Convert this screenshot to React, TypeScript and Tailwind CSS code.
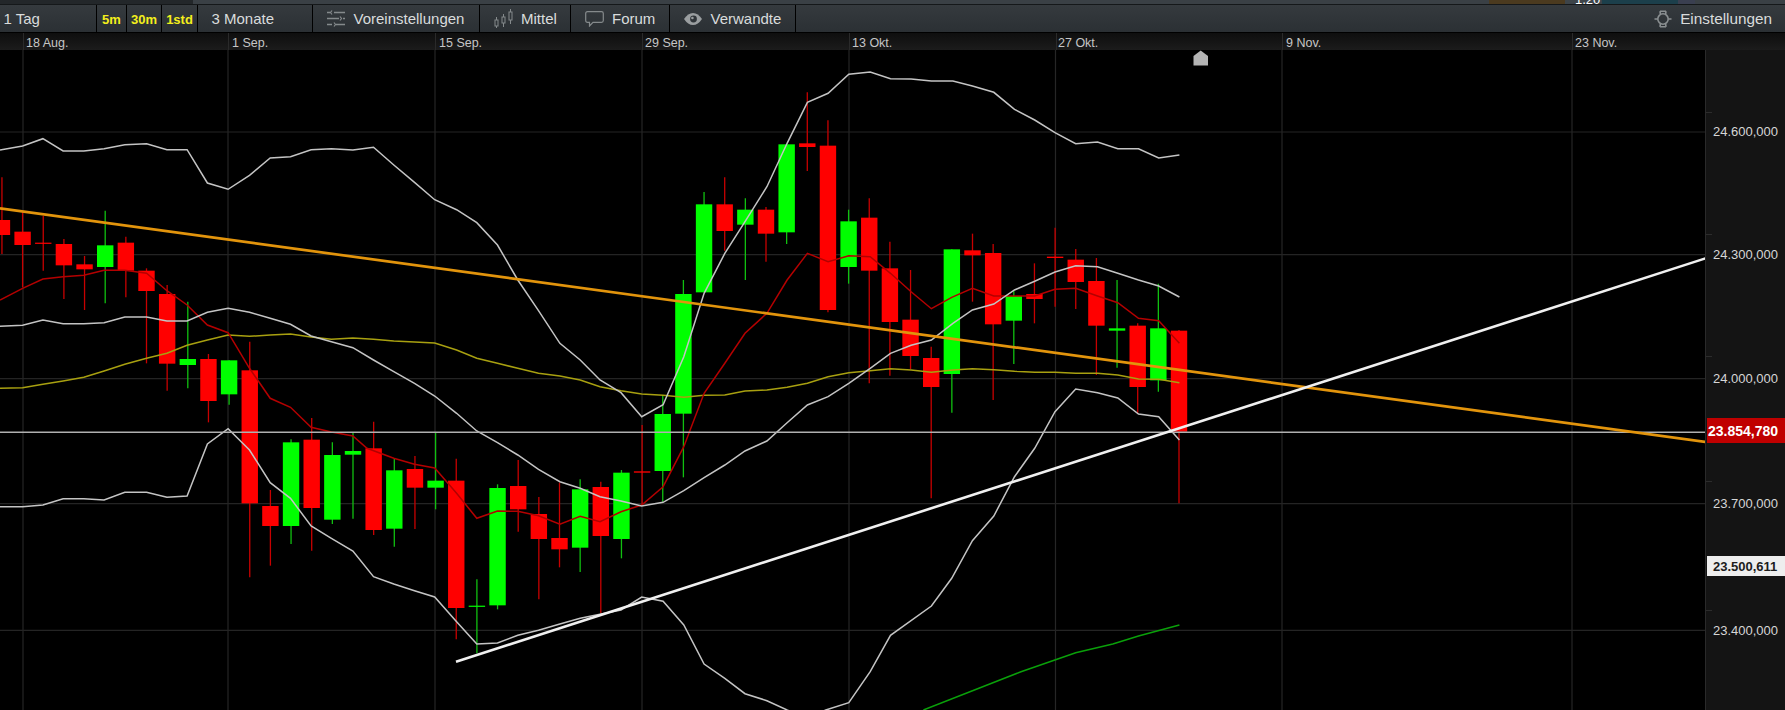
const F = 'font-["Liberation_Sans",Arial,sans-serif]';

const xOf = (i: number) => 22.6 + 20.65 * i;
const Y = (u: number) => 60 + u / 3;
const ZL = (z: number) => z / 2.613;
const ZR = (z: number) => 600 + z / 2.613;
const D = 930;

// index, green?, wickTop, bodyTop, bodyBottom, wickBottom (vertical zoom units)
const candles: [number, number, number, number, number, number][] = [
  [-1, 0, 352, 480, 525, 582],
  [0, 0, 455, 515, 555, 682],
  [1, 0, 468, 548, 551, 632],
  [2, 0, 537, 552, 616, 717],
  [3, 0, 588, 613, 628, 750],
  [4, 1, 452, 556, 621, 730],
  [5, 0, 530, 548, 632, 712],
  [6, 0, 625, 632, 693, 910],
  [7, 0, 675, 702, 911, 992],
  [8, 1, 725, 897, 915, 985],
  [9, 0, 882, 897, 93 + D, 157 + D],
  [10, 1, 901, 901, 73 + D, 104 + D],
  [11, 0, 845, 931, 400 + D, 622 + D],
  [12, 0, 360 + D, 408 + D, 468 + D, 587 + D],
  [13, 1, 208 + D, 217 + D, 468 + D, 522 + D],
  [14, 0, 144 + D, 209 + D, 414 + D, 542 + D],
  [15, 1, 217 + D, 255 + D, 449 + D, 462 + D],
  [16, 1, 189 + D, 243 + D, 254 + D, 446 + D],
  [17, 0, 155 + D, 235 + D, 480 + D, 495 + D],
  [18, 1, 265 + D, 301 + D, 476 + D, 530 + D],
  [19, 0, 258 + D, 297 + D, 353 + D, 477 + D],
  [20, 1, 187 + D, 332 + D, 353 + D, 418 + D],
  [21, 0, 266 + D, 332 + D, 714 + D, 808 + D],
  [22, 1, 628 + D, 707 + D, 710 + D, 850 + D],
  [23, 1, 343 + D, 354 + D, 706 + D, 718 + D],
  [24, 0, 270 + D, 348 + D, 418 + D, 485 + D],
  [25, 0, 381 + D, 432 + D, 507 + D, 688 + D],
  [26, 0, 338 + D, 504 + D, 538 + D, 592 + D],
  [27, 1, 328 + D, 358 + D, 533 + D, 606 + D],
  [28, 0, 335 + D, 351 + D, 498 + D, 730 + D],
  [29, 1, 300 + D, 308 + D, 507 + D, 565 + D],
  [30, 0, 165 + D, 304 + D, 308 + D, 405 + D],
  [31, 1, 75 + D, 132 + D, 303 + D, 395 + D],
  [32, 1, 660, 702, 131 + D, 322 + D],
  [33, 1, 396, 433, 697, 697],
  [34, 0, 352, 433, 513, 572],
  [35, 1, 415, 449, 494, 660],
  [36, 0, 441, 449, 521, 605],
  [37, 1, 253, 253, 517, 552],
  [38, 0, 97, 250, 261, 333],
  [39, 0, 181, 257, 750, 757],
  [40, 1, 449, 484, 621, 671],
  [41, 0, 415, 473, 632, 40 + D],
  [42, 0, 545, 625, 786, 947],
  [43, 0, 630, 779, 888, 927],
  [44, 0, 860, 894, 981, 385 + D],
  [45, 1, 568, 568, 942, 128 + D],
  [46, 0, 521, 571, 586, 725],
  [47, 0, 552, 579, 793, 90 + D],
  [48, 1, 693, 708, 782, 912],
  [49, 0, 610, 702, 717, 790],
  [50, 0, 503, 590, 594, 740],
  [51, 0, 567, 599, 666, 747],
  [52, 0, 594, 663, 797, 945],
  [53, 1, 660, 805, 812, 923],
  [54, 0, 790, 797, 981, 130 + D],
  [55, 1, 671, 805, 961, 65 + D],
  [56, 0, 810, 812, 185 + D, 400 + D],
];

type P = [number, number];
const pts = (l: P[], r: P[]) =>
  [...l.map(([x, u]) => `${ZL(x).toFixed(1)},${Y(u).toFixed(1)}`), ...r.map(([x, u]) => `${ZR(x).toFixed(1)},${Y(u).toFixed(1)}`)].join(" ");

const upper = pts(
  [[0, 270], [59, 258], [112, 236], [165, 273], [219, 273], [272, 266], [326, 254], [383, 251], [436, 269], [489, 269], [542, 369], [596, 388], [652, 346], [706, 294], [759, 290], [813, 269], [866, 266], [922, 270], [976, 262], [1029, 315], [1083, 367], [1136, 419], [1193, 449], [1246, 488], [1300, 555], [1353, 660], [1407, 752], [1463, 850], [1516, 900]],
  [[0, 960], [55, 998], [109, 1070], [165, 1034], [219, 890], [272, 700], [326, 580], [379, 485], [436, 380], [489, 250], [542, 127], [596, 100], [650, 43], [706, 36], [759, 56], [813, 57], [866, 63], [922, 63], [973, 78], [1029, 97], [1083, 148], [1136, 180], [1189, 218], [1243, 251], [1300, 246], [1353, 266], [1407, 266], [1460, 294], [1514, 285]]
);
const middle = pts(
  [[0, 799], [59, 796], [112, 780], [165, 791], [219, 791], [272, 788], [326, 771], [383, 771], [436, 783], [489, 783], [542, 757], [596, 745], [652, 757], [706, 775], [759, 793], [813, 828], [866, 845], [922, 863], [976, 900], [1029, 935], [1083, 970], [1136, 1008], [1193, 1060], [1246, 1113], [1300, 1148], [1353, 1185], [1407, 1228], [1463, 1265], [1516, 1285]],
  [[0, 1310], [55, 1323], [109, 1338], [165, 1327], [219, 1292], [272, 1253], [326, 1215], [379, 1173], [436, 1143], [489, 1088], [542, 1035], [596, 1010], [650, 970], [706, 925], [759, 880], [813, 856], [866, 840], [922, 790], [973, 750], [1029, 732], [1083, 690], [1136, 664], [1189, 636], [1243, 617], [1300, 620], [1353, 640], [1407, 660], [1460, 678], [1514, 711]]
);
const lower = pts(
  [[0, 1340], [59, 1340], [112, 1335], [165, 1316], [219, 1316], [272, 1320], [326, 1297], [383, 1297], [436, 1312], [489, 1308], [542, 1152], [596, 1106], [652, 1170], [706, 1268], [759, 1315], [813, 1398], [866, 1435], [922, 1473], [976, 1550], [1029, 1572], [1083, 1592], [1136, 1611], [1193, 1685], [1246, 1752], [1300, 1749], [1353, 1726], [1407, 1711], [1463, 1692], [1516, 1675]],
  [[55, 1650], [109, 1611], [165, 1624], [219, 1695], [272, 1812], [326, 1855], [379, 1901], [436, 1922], [489, 1950], [540, 1975], [590, 1950], [650, 1928], [706, 1835], [759, 1726], [866, 1638], [919, 1555], [973, 1442], [1029, 1368], [1083, 1250], [1136, 1165], [1189, 1055], [1243, 987], [1300, 998], [1353, 1014], [1407, 1062], [1460, 1070], [1514, 1140]]
);
const redMa = pts(
  [[0, 720], [59, 685], [112, 657], [165, 650], [219, 646], [272, 631], [326, 631], [383, 640], [436, 692], [489, 735], [542, 795], [596, 818], [652, 925], [706, 1015], [759, 1042], [813, 1102], [866, 1116], [922, 1128], [959, 1165], [1029, 1195], [1083, 1213], [1136, 1224], [1193, 1300], [1246, 1375], [1300, 1353], [1353, 1354], [1407, 1367], [1463, 1393], [1516, 1369]],
  [[0, 1385], [55, 1355], [109, 1335], [165, 1280], [219, 1160], [272, 1000], [326, 910], [379, 820], [436, 760], [489, 660], [542, 580], [596, 605], [650, 587], [706, 590], [759, 640], [813, 695], [866, 746], [919, 712], [973, 685], [1029, 708], [1083, 708], [1136, 708], [1189, 688], [1243, 685], [1300, 708], [1353, 728], [1407, 775], [1460, 782], [1514, 850]]
);
const yellow = pts(
  [[0, 985], [59, 983], [112, 973], [165, 963], [219, 952], [272, 933], [326, 913], [383, 895], [436, 880], [489, 856], [542, 840], [596, 825], [652, 829], [706, 825], [759, 822], [813, 831], [866, 838], [922, 834], [976, 838], [1029, 843], [1083, 846], [1136, 849], [1193, 870], [1246, 895], [1300, 910], [1353, 925], [1407, 940], [1463, 948], [1516, 960]],
  [[0, 980], [55, 992], [109, 1002], [165, 1006], [219, 1012], [272, 1006], [326, 1005], [379, 993], [436, 990], [489, 982], [542, 970], [596, 950], [650, 938], [706, 932], [759, 926], [813, 930], [866, 937], [922, 930], [973, 926], [1029, 929], [1083, 934], [1136, 937], [1189, 937], [1243, 940], [1300, 940], [1353, 945], [1407, 957], [1460, 958], [1514, 968]]
);
const greenMa = pts([], [[845, 1950], [1000, 1880], [1100, 1835], [1243, 1778], [1340, 1752], [1407, 1728], [1514, 1695]]);

const vGrid = [23, 228, 435, 642, 849, 1055.5, 1282, 1572];
const hGrid = [132, 254.7, 378.7, 503.7, 630.3];
const dates: [string, number][] = [["18 Aug.", 26], ["1 Sep.", 232], ["15 Sep.", 439], ["29 Sep.", 645], ["13 Okt.", 852], ["27 Okt.", 1058], ["9 Nov.", 1286], ["23 Nov.", 1575]];
const prices: [string, number][] = [["24.600,000", 131], ["24.300,000", 253.5], ["24.000,000", 377.5], ["23.700,000", 503], ["23.400,000", 629.5]];

function Chart() {
  return (
    <svg viewBox="0 50 1705 660" className="block w-[1705px] h-[660px] shrink-0 blur-[0.35px]">
      <rect x="0" y="50" width="1705" height="660" fill="#000" />
      {vGrid.map((x) => <line key={x} x1={x} x2={x} y1="50" y2="710" stroke="#262626" strokeWidth="1.2" />)}
      {hGrid.map((y) => <line key={y} x1="0" x2="1705" y1={y} y2={y} stroke="#242424" strokeWidth="1.2" />)}
      {candles.map(([i, g, wt, bt, bb, wb]) => {
        const x = xOf(i);
        const wick = g ? "#10c010" : "#c80000";
        const body = g ? "#00ff00" : "#ff0000";
        return (
          <g key={i}>
            <line x1={x} x2={x} y1={Y(wt)} y2={Y(wb)} stroke={wick} strokeWidth="1.3" />
            <rect x={x - 8.2} width="16.4" y={Y(bt)} height={Math.max(Y(bb) - Y(bt), 1.2)} fill={body} />
          </g>
        );
      })}
      <polyline points={yellow} fill="none" stroke="#a8a010" strokeWidth="1.5" />
      <polyline points={redMa} fill="none" stroke="#b40000" strokeWidth="1.5" />
      <polyline points={upper} fill="none" stroke="#c4c4c4" strokeWidth="1.5" />
      <polyline points={middle} fill="none" stroke="#c4c4c4" strokeWidth="1.5" />
      <polyline points={lower} fill="none" stroke="#c4c4c4" strokeWidth="1.5" />
      <polyline points={greenMa} fill="none" stroke="#0aa00a" strokeWidth="1.5" />
      <line x1="0" x2="1705" y1="432.3" y2="432.3" stroke="#b0b0b0" strokeWidth="1.4" />
      <line x1="0" y1="208.3" x2="1705.6" y2="442" stroke="#e2940c" strokeWidth="2.7" />
      <line x1="456" y1="661.7" x2="1705.6" y2="258.3" stroke="#f0f0f0" strokeWidth="2.6" />
      <polygon points="1193.5,65.5 1193.5,56 1200.7,50.5 1208,56 1208,65.5" fill="#b4b4b4" />
    </svg>
  );
}

function SlidersIcon() {
  return (
    <svg width="18" height="17" viewBox="0 0 18 17" fill="none" stroke="#858a8c" strokeWidth="1.5">
      <path d="M0 2.5H3M7 2.5H18M0 8.5H12M16 8.5H18M0 14.5H5M9 14.5H18" />
      <path d="M5 .5L3.5 2.5L5 4.5M13 6.5L14.5 8.5L13 10.5M7 12.5L8.5 14.5L7 16.5" strokeWidth="1.2" />
    </svg>
  );
}
function CandleIcon() {
  return (
    <svg width="19" height="20" viewBox="0 0 19 20" fill="none" stroke="#858a8c" strokeWidth="1">
      <path d="M2.5 8V19M9.5 5V18M16.5 0V15" />
      <rect x="1" y="11" width="3" height="6" fill="#2f3438" />
      <rect x="8" y="8" width="3" height="6" fill="#2f3438" />
      <rect x="15" y="3" width="3" height="8" fill="#2f3438" />
    </svg>
  );
}
function BubbleIcon() {
  return (
    <svg width="19" height="16" viewBox="0 0 19 16" fill="none" stroke="#858a8c" strokeWidth="1.2">
      <path d="M2.5 .7H16.5Q18.3 .7 18.3 2.5V9.5Q18.3 11.3 16.5 11.3H8L4.5 15V11.3H2.5Q.7 11.3 .7 9.5V2.5Q.7 .7 2.5 .7Z" />
    </svg>
  );
}
function EyeIcon() {
  return (
    <svg width="18" height="12" viewBox="0 0 18 12">
      <path d="M0 6Q4 0 9 0T18 6Q14 12 9 12T0 6Z" fill="#9a9ea0" />
      <circle cx="9.5" cy="6" r="3.4" fill="#2f3438" />
      <circle cx="8.4" cy="5" r="1.3" fill="#9a9ea0" />
    </svg>
  );
}
function GearIcon() {
  return (
    <svg width="18" height="18" viewBox="0 0 18 18" fill="none" stroke="#8a8f91" strokeWidth="1.6">
      <circle cx="9" cy="9" r="5.2" />
      <path d="M6 1.2H12M6 16.8H12M6 1.2L6.4 4.4M12 1.2L11.6 4.4M6 16.8L6.4 13.6M12 16.8L11.6 13.6M0.5 9H3.6M14.4 9H17.5" />
    </svg>
  );
}

function Cell({ w, children, className = "" }: { w: string; children: React.ReactNode; className?: string }) {
  return <div className={`${w} h-full shrink-0 flex items-center border-r border-black ${className}`}>{children}</div>;
}
const Lbl = ({ children }: { children: React.ReactNode }) => <span className="pt-[2px]">{children}</span>;

export default function App() {
  return (
    <div className={`${F} w-[1785px] h-[710px] overflow-hidden bg-black flex flex-col`}>
      <div className="h-[4px] flex shrink-0 bg-[#3a4045] overflow-hidden">
        <div className="w-[193px] bg-[#23272a]" />
        <div className="w-[1296px]" />
        <div className="w-[76px] bg-[#4b3a1f]" />
        <div className="w-[37px] bg-[#3d4449] text-white text-[13px] leading-[4px] pl-[10px] flex items-end"><span className="block h-[4px] leading-[0px]">1,20</span></div>
        <div className="w-[76px] bg-[#1c3f4b]" />
        <div className="w-[17px] bg-[#3a3f50]" />
      </div>
      <div className="h-[1px] bg-[#15181a] shrink-0" />
      <div className="h-[27px] shrink-0 flex items-stretch bg-gradient-to-b from-[#353a3e] to-[#2b3034] text-[15px] text-[#d9dcdc]">
        <Cell w="w-[97px]" className="pl-[3.5px]"><Lbl>1 Tag</Lbl></Cell>
        <Cell w="w-[30px]" className="justify-center text-[13px] font-bold text-[#f4ef1c]"><Lbl>5m</Lbl></Cell>
        <Cell w="w-[35px]" className="justify-center text-[13px] font-bold text-[#f4ef1c]"><Lbl>30m</Lbl></Cell>
        <Cell w="w-[36px]" className="justify-center text-[13px] font-bold text-[#f4ef1c]"><Lbl>1std</Lbl></Cell>
        <Cell w="w-[115px]" className="pl-[13.5px]"><Lbl>3 Monate</Lbl></Cell>
        <Cell w="w-[167px]" className="pl-[14px] gap-[8.5px]"><SlidersIcon /><Lbl>Voreinstellungen</Lbl></Cell>
        <Cell w="w-[91px]" className="pl-[14px] gap-[8px]"><CandleIcon /><Lbl>Mittel</Lbl></Cell>
        <Cell w="w-[99px]" className="pl-[14px] gap-[8px]"><BubbleIcon /><Lbl>Forum</Lbl></Cell>
        <Cell w="w-[126px]" className="pl-[14px] gap-[8.5px]"><EyeIcon /><Lbl>Verwandte</Lbl></Cell>
        <div className="flex-1 flex items-center justify-end gap-[8px] pr-[13px] text-[15.3px]"><GearIcon /><Lbl>Einstellungen</Lbl></div>
      </div>
      <div className="h-[18px] shrink-0 relative border-t border-black bg-gradient-to-b from-[#0e0e0e] to-[#1c1c1c] text-[12.5px] leading-[16px] text-[#c6c6c6]">
        {vGrid.map((x) => <div key={x} className="absolute top-0 bottom-0 w-px bg-[#2a2a2a]" style={{ left: x }} />)}
        {dates.map(([t, x]) => <span key={t} className="absolute top-[2px]" style={{ left: x }}>{t}</span>)}
      </div>
      <div className="flex flex-1 min-h-0">
        <Chart />
        <div className="relative flex-1 bg-[#141414] border-l border-[#2a2a2a] text-[13px] text-[#d6d6d6]">
          {[111.7, 234, 356, 481, 610].map((y) => <div key={y} className="absolute left-0 w-[6px] h-px bg-[#2c2c2c]" style={{ top: y - 50 }} />)}
          {prices.map(([t, y]) => <span key={t} className="absolute left-[7px] leading-[16px]" style={{ top: y - 57 }}>{t}</span>)}
          <div className="absolute left-[1px] right-0 top-[368px] h-[25px] bg-[#c00000] text-white font-bold text-[14px] flex items-center pl-[1px] pt-[1px]">23.854,780</div>
          <div className="absolute left-[1px] right-0 top-[506px] h-[20px] bg-[#eeeeee] text-[#1c1c1c] font-bold text-[13px] flex items-center pl-[6px] pt-[1px]">23.500,611</div>
        </div>
      </div>
    </div>
  );
}
